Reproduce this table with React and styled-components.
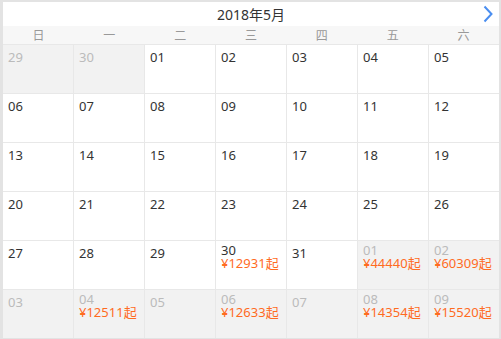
import React from 'react';
import styled, { createGlobalStyle } from 'styled-components';

const GlobalStyle = createGlobalStyle`
  html, body { margin: 0; padding: 0; background: #fff; }
  body { font-family: "Noto Sans", "Noto Sans CJK SC", sans-serif; }
`;

const Frame = styled.div`
  width: 501px;
  box-sizing: border-box;
  border: solid #e3e3e3;
  border-width: 2px 2px 1px 3px;
  background: #fff;
`;

const Header = styled.div`
  position: relative;
  height: 24px;
  display: flex;
  align-items: center;
  justify-content: center;
  font-size: 14px;
  color: #333;
`;

const NextButton = styled.span`
  position: absolute;
  right: 6px;
  top: 3px;
  display: flex;
`;

const WeekRow = styled.div`
  display: grid;
  grid-template-columns: repeat(7, 1fr);
  height: 18px;
  background: #f7f7f7;
  border-bottom: 1px solid #e8e8e8;
`;

const WeekDay = styled.div`
  display: flex;
  align-items: center;
  justify-content: center;
  font-size: 12px;
  color: #999;
`;

const Grid = styled.div`
  display: grid;
  grid-template-columns: repeat(7, 1fr);
  grid-auto-rows: 48px;
  row-gap: 1px;
  column-gap: 1px;
  background: #e8e8e8;
`;

const Cell = styled.div`
  background: ${(p) => (p.$muted ? '#f2f2f2' : '#fff')};
  padding: ${(p) => (p.$hasPrice ? '3px' : '6px')} 5px 0;
  display: flex;
  flex-direction: column;
  font-size: 13px;
  line-height: 13px;
`;

const DayNum = styled.span`
  color: ${(p) => (p.$muted ? '#bbb' : '#333')};
`;

const Price = styled.span`
  color: #ff6b1f;
`;

const weekdays = ['日', '一', '二', '三', '四', '五', '六'];

const days = [
  ['29', true], ['30', true], ['01'], ['02'], ['03'], ['04'], ['05'],
  ['06'], ['07'], ['08'], ['09'], ['10'], ['11'], ['12'],
  ['13'], ['14'], ['15'], ['16'], ['17'], ['18'], ['19'],
  ['20'], ['21'], ['22'], ['23'], ['24'], ['25'], ['26'],
  ['27'], ['28'], ['29'], ['30', false, '12931'], ['31'], ['01', true, '44440'], ['02', true, '60309'],
  ['03', true], ['04', true, '12511'], ['05', true], ['06', true, '12633'], ['07', true], ['08', true, '14354'], ['09', true, '15520'],
];

export default function App() {
  return (
    <>
      <GlobalStyle />
      <Frame>
        <Header>
          2018年5月
          <NextButton>
            <svg width="10" height="18" viewBox="0 0 10 18">
              <path d="M1.5 1.5 L8.5 9 L1.5 16.5" fill="none" stroke="#4a8ef0" strokeWidth="2" />
            </svg>
          </NextButton>
        </Header>
        <WeekRow>
          {weekdays.map((w) => <WeekDay key={w}>{w}</WeekDay>)}
        </WeekRow>
        <Grid>
          {days.map(([num, muted, price], i) => (
            <Cell key={i} $muted={muted} $hasPrice={!!price}>
              <DayNum $muted={muted}>{num}</DayNum>
              {price && <Price>¥{price}起</Price>}
            </Cell>
          ))}
        </Grid>
      </Frame>
    </>
  );
}
